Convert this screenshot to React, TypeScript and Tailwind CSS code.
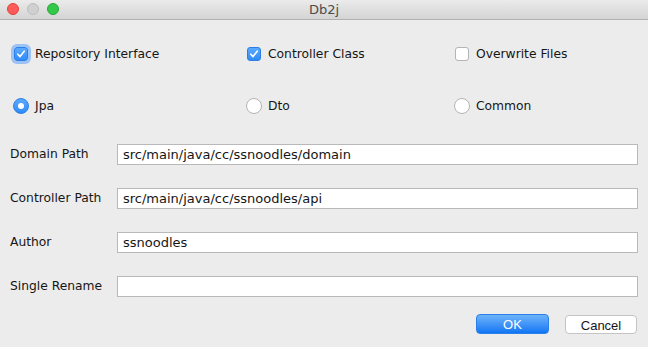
import React, { useState } from "react";

const font = { fontFamily: '"DejaVu Sans", "Liberation Sans", sans-serif' };

const Check: React.FC<{ checked: boolean; focused?: boolean }> = ({ checked, focused }) => (
    <div className="w-[16px] h-[16px] flex items-center justify-center shrink-0">
        <div
            className={
                checked
                    ? "w-[14px] h-[14px] rounded-[3px] bg-gradient-to-b from-[#5aa9fd] to-[#2f8cf9] border border-[#2a7fe6] flex items-center justify-center " +
                      (focused ? "shadow-[0_0_0_3px_#9cc2f5]" : "")
                    : "w-[14px] h-[14px] rounded-[3px] bg-white border border-[#b4b4b4]"
            }
        >
            {checked && (
                <svg width="10" height="10" viewBox="0 0 10 10">
                    <path d="M1.8 5.2 L4 7.6 L8.2 2.2" fill="none" stroke="#fff" strokeWidth="1.6" strokeLinecap="round" strokeLinejoin="round" />
                </svg>
            )}
        </div>
    </div>
);

const Radio: React.FC<{ checked: boolean }> = ({ checked }) => (
    <div className="w-[16px] h-[16px] flex items-center justify-center shrink-0">
        {checked ? (
            <div className="w-[16px] h-[16px] rounded-full bg-gradient-to-b from-[#5aa9fd] to-[#2f8cf9] border border-[#2a7fe6] flex items-center justify-center">
                <div className="w-[6px] h-[6px] rounded-full bg-white" />
            </div>
        ) : (
            <div className="w-[16px] h-[16px] rounded-full bg-white border border-[#b4b4b4]" />
        )}
    </div>
);

const Field: React.FC<{ label: string; value: string }> = ({ label, value }) => (
    <div className="flex items-center h-[21px]">
        <span className="w-[107px] text-[12.3px] text-[#161616]">{label}</span>
        <div className="flex-1 h-[21px] bg-white border border-[#b9b9b9] flex items-center pl-[5px] text-[13px] text-[#161616]">
            {value}
        </div>
    </div>
);

const App: React.FC = () => {
    const [mode] = useState("Jpa");

    return (
        <div className="w-[648px] h-[347px] bg-[#ececec] flex flex-col overflow-hidden" style={font}>
            {/* title bar */}
            <div className="relative h-[20px] bg-gradient-to-b from-[#ebebeb] to-[#d4d4d4] border-b border-[#b2b2b2] flex items-center justify-center">
                <div className="absolute left-[7px] top-[3px] flex gap-[8px]">
                    <div className="w-[12px] h-[12px] rounded-full bg-[#fc5b57] border border-[#e0443e]" />
                    <div className="w-[12px] h-[12px] rounded-full bg-[#d0d0d0] border border-[#bdbdbd]" />
                    <div className="w-[12px] h-[12px] rounded-full bg-[#34c84a] border border-[#26a934]" />
                </div>
                <span className="text-[13px] text-[#4c4c4c]">Db2j</span>
            </div>

            <div className="flex flex-col px-[10px]">
                <div className="grid grid-cols-[233px_208px_1fr] h-[20px] mt-[24px] pl-[3px] items-center text-[12.3px] text-[#161616]">
                    <div className="flex items-center gap-[6px]">
                        <Check checked focused />
                        <span>Repository Interface</span>
                    </div>
                    <div className="flex items-center gap-[6px]">
                        <Check checked />
                        <span>Controller Class</span>
                    </div>
                    <div className="flex items-center gap-[6px]">
                        <Check checked={false} />
                        <span>Overwrite Files</span>
                    </div>
                </div>

                <div className="grid grid-cols-[233px_208px_1fr] h-[20px] mt-[32px] pl-[3px] items-center text-[12.3px] text-[#161616]">
                    {["Jpa", "Dto", "Common"].map(m => (
                        <div key={m} className="flex items-center gap-[6px]">
                            <Radio checked={mode === m} />
                            <span>{m}</span>
                        </div>
                    ))}
                </div>

                <div className="flex flex-col gap-[23px] mt-[28px]">
                    <Field label="Domain Path" value="src/main/java/cc/ssnoodles/domain" />
                    <Field label="Controller Path" value="src/main/java/cc/ssnoodles/api" />
                    <Field label="Author" value="ssnoodles" />
                    <Field label="Single Rename" value="" />
                </div>

                <div className="flex justify-end gap-[16px] mt-[17px] pr-[1px]">
                    <button
                        className="w-[73px] h-[20px] rounded-[4px] bg-gradient-to-b from-[#6cb3fa] to-[#0b75f3] border border-[#2a80e8] text-white text-[13px]"
                        style={{ fontFamily: '"Liberation Sans", sans-serif' }}
                    >
                        OK
                    </button>
                    <button
                        className="w-[72px] h-[19px] mt-[1px] rounded-[4px] bg-white border border-[#c4c4c4] text-[#161616] text-[13px]"
                        style={{ fontFamily: '"Liberation Sans", sans-serif' }}
                    >
                        Cancel
                    </button>
                </div>
            </div>
        </div>
    );
};

export default App;
